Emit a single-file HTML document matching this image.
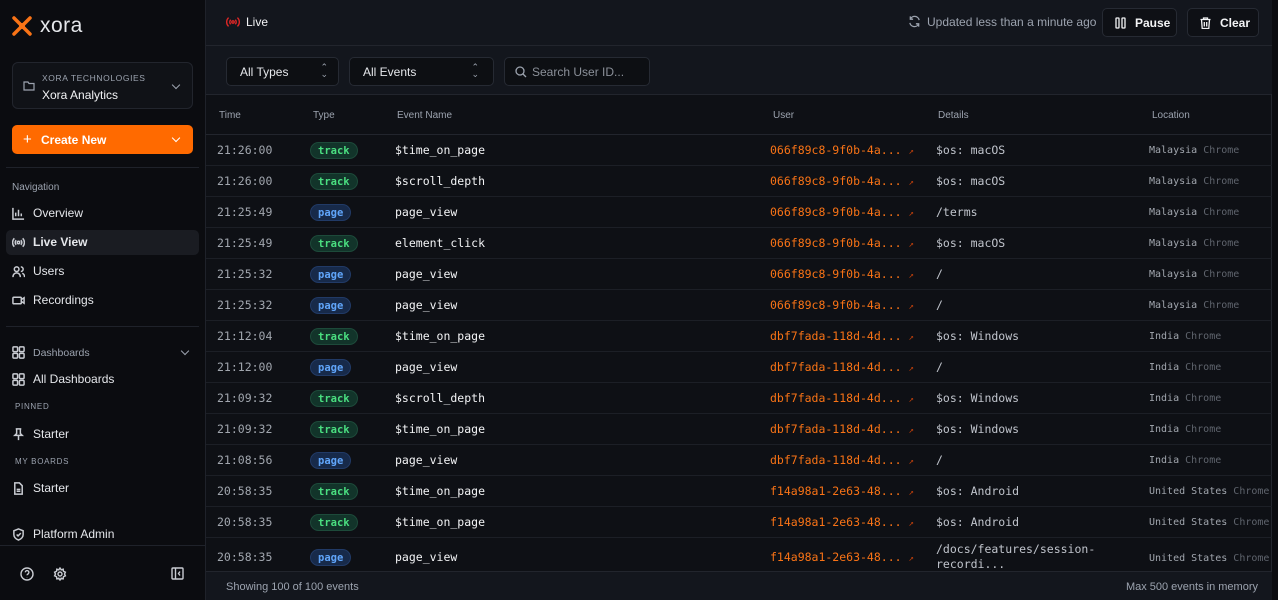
<!DOCTYPE html>
<html><head><meta charset="utf-8"><style>
*{box-sizing:border-box;margin:0;padding:0}
body{width:1278px;height:600px;overflow:hidden;background:#0b0c10;font-family:"Liberation Sans",sans-serif;color:#e5e7eb;position:relative}
.sb{position:absolute;left:0;top:0;width:205px;height:600px;background:#0b0c10}
.main{position:absolute;left:205px;top:0;width:1067px;height:600px;background:#0e1015;border-left:1px solid #1f222a;border-right:1px solid #23262e}
.abs{position:absolute}
.ni{position:absolute;left:12px;font-size:12px;color:#e5e7eb;display:flex;align-items:center;gap:8px}
.ni svg{width:13px;height:13px;stroke:#c9ccd2;fill:none;stroke-width:1.6}
.mono{font-family:"DejaVu Sans Mono","Liberation Mono",monospace}
.row{position:absolute;left:0;width:1066px;height:31px;border-bottom:1px solid #1c1f26;font-size:11.5px}
.row>div{position:absolute;top:0;height:30px;line-height:30px;white-space:nowrap}
.b{display:inline-block;height:17px;line-height:17px;border-radius:9px;padding:0 7px;font-size:10.5px;font-weight:bold;vertical-align:middle}
.tr{background:#12342a;color:#4ade80;border:1px solid #1d4a3a}
.pg{background:#172a4a;color:#60a5fa;border:1px solid #213a66}
.btn{position:absolute;top:8px;height:29px;border:1px solid #262a33;border-radius:5px;background:#0e1015;font-size:12px;font-weight:bold;color:#f3f4f6;display:flex;align-items:center;gap:9px;padding-left:12px}
.sel{position:absolute;top:57px;height:29px;border:1px solid #262a33;border-radius:5px;background:#0d0f13;font-size:12px;color:#e5e7eb;display:flex;align-items:center;padding-left:13px}
.chev{position:absolute;width:6px;height:6px;border-right:1.3px solid #9ca3af;border-bottom:1.3px solid #9ca3af;transform:rotate(45deg)}
</style></head><body>
<div class="sb">
 <svg class="abs" style="left:12px;top:16px" width="20" height="20" viewBox="0 0 20 20"><path d="M2 2 L8 8 M18 2 L12 8 M2 18 L8 12 M18 18 L12 12" stroke="#f97316" stroke-width="3.5" stroke-linecap="round"/><circle cx="10" cy="10" r="3" fill="#f97316"/></svg>
 <div class="abs" style="left:40px;top:14px;font-size:21px;color:#e5e7eb;letter-spacing:0.5px">xora</div>
 <div class="abs" style="left:12px;top:62px;width:181px;height:47px;border:1px solid #22252d;border-radius:6px;background:#101217"></div>
 <svg class="abs" style="left:23px;top:80px" width="12" height="11" viewBox="0 0 12 11"><path d="M1 2h4l1 1.5h5v6.5h-10z" fill="none" stroke="#9ca3af" stroke-width="1.2"/></svg>
 <div class="abs" style="left:42px;top:73px;font-size:8.5px;color:#9ca3af;letter-spacing:0.6px">XORA TECHNOLOGIES</div>
 <div class="abs" style="left:42px;top:88px;font-size:12px;color:#f3f4f6">Xora Analytics</div>
 <div class="chev" style="left:173px;top:82px"></div>
 <div class="abs" style="left:12px;top:125px;width:181px;height:29px;background:#ff6a00;border-radius:5px"></div>
 <div class="abs" style="left:23px;top:131px;font-size:15px;color:#fff">+</div>
 <div class="abs" style="left:41px;top:133px;font-size:12px;color:#fff;font-weight:bold">Create New</div>
 <div class="chev" style="left:173px;top:135px;border-color:#fff"></div>
 <div class="abs" style="left:6px;top:167px;width:193px;height:1px;background:#1f222a"></div>
 <div class="abs" style="left:12px;top:182px;font-size:10px;color:#9ca3af">Navigation</div>
 <div class="abs" style="left:6px;top:230px;width:193px;height:25px;background:#1a1c22;border-radius:5px"></div>
 <div class="ni" style="top:206px"><svg viewBox="0 0 14 14"><path d="M1 1v12h12M4 10V6M7 10V3M10 10V7"/></svg>Overview</div>
 <div class="ni" style="top:235px;font-weight:bold"><svg viewBox="0 0 14 14"><circle cx="7" cy="7" r="1.3"/><path d="M4.5 4.5a3.5 3.5 0 000 5M9.5 4.5a3.5 3.5 0 010 5M2.5 2.5a6.3 6.3 0 000 9M11.5 2.5a6.3 6.3 0 010 9"/></svg>Live View</div>
 <div class="ni" style="top:264px"><svg viewBox="0 0 14 14"><circle cx="5" cy="4.5" r="2.5"/><path d="M1 13c0-3 2-4.5 4-4.5s4 1.5 4 4.5M9.5 2a2.5 2.5 0 010 5M11 9c1.5.5 2.5 2 2.5 4"/></svg>Users</div>
 <div class="ni" style="top:293px"><svg viewBox="0 0 14 14"><rect x="1" y="3.5" width="9" height="7" rx="1"/><path d="M10 6l3-2v6l-3-2"/></svg>Recordings</div>
 <div class="abs" style="left:6px;top:326px;width:193px;height:1px;background:#1f222a"></div>
 <div class="ni" style="top:346px;font-size:10.5px;color:#9ca3af"><svg viewBox="0 0 14 14"><rect x="1" y="1" width="5" height="5" rx="1"/><rect x="8" y="1" width="5" height="5" rx="1"/><rect x="1" y="8" width="5" height="5" rx="1"/><rect x="8" y="8" width="5" height="5" rx="1"/></svg>Dashboards</div>
 <div class="chev" style="left:182px;top:348px"></div>
 <div class="ni" style="top:372px"><svg viewBox="0 0 14 14"><rect x="1" y="1" width="5" height="5" rx="1"/><rect x="8" y="1" width="5" height="5" rx="1"/><rect x="1" y="8" width="5" height="5" rx="1"/><rect x="8" y="8" width="5" height="5" rx="1"/></svg>All Dashboards</div>
 <div class="abs" style="left:15px;top:402px;font-size:8px;color:#9ca3af;letter-spacing:0.7px">PINNED</div>
 <div class="ni" style="top:427px"><svg viewBox="0 0 14 14"><path d="M4 1h6M5 1v5l-2 2h8l-2-2V1M7 8v5"/></svg>Starter</div>
 <div class="abs" style="left:15px;top:457px;font-size:8px;color:#9ca3af;letter-spacing:0.7px">MY BOARDS</div>
 <div class="ni" style="top:481px"><svg viewBox="0 0 14 14"><path d="M3 1h5l3 3v9H3zM5 8h4M5 10h4"/></svg>Starter</div>
 <div class="ni" style="top:527px"><svg viewBox="0 0 14 14"><path d="M7 1l5 2v4c0 3-2.5 5-5 6-2.5-1-5-3-5-6V3zM5 7l1.5 1.5L9.5 5.5"/></svg>Platform Admin</div>
 <div class="abs" style="left:0;top:545px;width:205px;height:1px;background:#1f222a"></div>
 <svg class="abs" style="left:20px;top:567px" width="14" height="14" viewBox="0 0 14 14" fill="none" stroke="#c9ccd2" stroke-width="1.4"><circle cx="7" cy="7" r="6"/><path d="M5.3 5.3a1.8 1.8 0 113 1.4c-.8.5-1.3.8-1.3 1.6M7 10.3v.2"/></svg>
 <svg class="abs" style="left:53px;top:567px" width="14" height="14" viewBox="0 0 14 14" fill="none" stroke="#c9ccd2" stroke-width="1.4"><circle cx="7" cy="7" r="2"/><path d="M7 1l1.2 1.8 2-.6.3 2.1 1.9.9-.9 1.8.9 1.8-1.9.9-.3 2.1-2-.6L7 13l-1.2-1.8-2 .6-.3-2.1-1.9-.9.9-1.8-.9-1.8 1.9-.9.3-2.1 2 .6z"/></svg>
 <svg class="abs" style="left:171px;top:567px" width="13" height="13" viewBox="0 0 13 13" fill="none" stroke="#c9ccd2" stroke-width="1.4"><rect x="1" y="1" width="11" height="11" rx="1"/><path d="M4.5 1v11M9 4.5L7.5 6.5 9 8.5"/></svg>
</div>
<div class="main">
 <div class="abs" style="left:0;top:0;width:1066px;height:95px;background:#13161d;border-bottom:1px solid #22252d"></div>
 <div class="abs" style="left:0;top:45px;width:1066px;height:1px;background:#22252d"></div>
 <svg class="abs" style="left:20px;top:16px" width="14" height="12" viewBox="0 0 14 12" fill="none" stroke="#dc2626" stroke-width="1.4"><circle cx="7" cy="6" r="1.2"/><path d="M4.7 3.7a3.3 3.3 0 000 4.6M9.3 3.7a3.3 3.3 0 010 4.6M2.6 1.6a6 6 0 000 8.8M11.4 1.6a6 6 0 010 8.8"/></svg>
 <div class="abs" style="left:40px;top:15px;font-size:12px;color:#f3f4f6">Live</div>
 <svg class="abs" style="left:702px;top:15px" width="13" height="13" viewBox="0 0 14 14" fill="none" stroke="#9ca3af" stroke-width="1.4"><path d="M12 5.5A5 5 0 002.5 4.5M2 8.5a5 5 0 009.5 1M2.5 1.5v3h3M11.5 12.5v-3h-3"/></svg>
 <div class="abs" style="left:721px;top:15px;font-size:12px;color:#9ca3af">Updated less than a minute ago</div>
 <div class="btn" style="left:896px;width:75px"><svg width="11" height="12" viewBox="0 0 11 12" fill="none" stroke="#f3f4f6" stroke-width="1.3"><rect x="1" y="1" width="3" height="10" rx=".5"/><rect x="7" y="1" width="3" height="10" rx=".5"/></svg>Pause</div>
 <div class="btn" style="left:981px;width:72px"><svg width="11" height="12" viewBox="0 0 11 12" fill="none" stroke="#f3f4f6" stroke-width="1.3"><path d="M0.5 2.5h10M3.5 2.5V1h4v1.5M1.5 2.5l.7 9h6.6l.7-9M4.3 5v4.5M6.7 5v4.5"/></svg>Clear</div>
 <div class="sel" style="left:20px;width:113px">All Types<span style="position:absolute;right:10px;top:6px;font-size:9px;color:#9ca3af;line-height:7px">&#8963;<br>&#8964;</span></div>
 <div class="sel" style="left:143px;width:145px">All Events<span style="position:absolute;right:14px;top:6px;font-size:9px;color:#9ca3af;line-height:7px">&#8963;<br>&#8964;</span></div>
 <div class="sel" style="left:298px;width:146px;color:#8b9099;padding-left:27px"><svg style="position:absolute;left:10px;top:8px" width="12" height="12" viewBox="0 0 12 12" fill="none" stroke="#9ca3af" stroke-width="1.3"><circle cx="5" cy="5" r="4"/><path d="M8 8l3 3"/></svg>Search User ID...</div>
 <div class="abs" style="left:0;top:96px;width:1066px;height:39px;border-bottom:1px solid #22252d;font-size:10px;color:#9ca3af">
  <span class="abs" style="left:13px;top:14px">Time</span><span class="abs" style="left:107px;top:14px">Type</span><span class="abs" style="left:191px;top:14px">Event Name</span><span class="abs" style="left:567px;top:14px">User</span><span class="abs" style="left:732px;top:14px">Details</span><span class="abs" style="left:946px;top:14px">Location</span>
 </div>
 <div id="rows"></div>
 <div class="abs" style="left:0;top:571px;width:1066px;height:29px;background:#13161d;border-top:1px solid #22252d;font-size:11px;color:#9ca3af"><span class="abs" style="left:20px;top:9px">Showing 100 of 100 events</span><span class="abs" style="right:14px;top:9px">Max 500 events in memory</span></div>
</div>
<script>
var d=[["21:26:00","t","$time_on_page","066f89c8-9f0b-4a...","$os: macOS","Malaysia"],
["21:26:00","t","$scroll_depth","066f89c8-9f0b-4a...","$os: macOS","Malaysia"],
["21:25:49","p","page_view","066f89c8-9f0b-4a...","/terms","Malaysia"],
["21:25:49","t","element_click","066f89c8-9f0b-4a...","$os: macOS","Malaysia"],
["21:25:32","p","page_view","066f89c8-9f0b-4a...","/","Malaysia"],
["21:25:32","p","page_view","066f89c8-9f0b-4a...","/","Malaysia"],
["21:12:04","t","$time_on_page","dbf7fada-118d-4d...","$os: Windows","India"],
["21:12:00","p","page_view","dbf7fada-118d-4d...","/","India"],
["21:09:32","t","$scroll_depth","dbf7fada-118d-4d...","$os: Windows","India"],
["21:09:32","t","$time_on_page","dbf7fada-118d-4d...","$os: Windows","India"],
["21:08:56","p","page_view","dbf7fada-118d-4d...","/","India"],
["20:58:35","t","$time_on_page","f14a98a1-2e63-48...","$os: Android","United States"],
["20:58:35","t","$time_on_page","f14a98a1-2e63-48...","$os: Android","United States"],
["20:58:35","p","page_view","f14a98a1-2e63-48...","/docs/features/session-<br>recordi...","United States"]];
var h="";d.forEach(function(r,i){var top=135+i*31;var last=i==13;var hh=last?40:31;
h+='<div class="row mono" style="top:'+top+'px;height:'+hh+'px'+(last?';border:none':'')+'"><div style="left:11px;color:#a1a6ae;height:'+(hh-1)+'px;line-height:'+(hh-1)+'px">'+r[0]+'</div><div style="left:104px;height:'+(hh-1)+'px;line-height:'+(hh-1)+'px"><span class="b '+(r[1]=="t"?"tr":"pg")+'">'+(r[1]=="t"?"track":"page")+'</span></div><div style="left:189px;color:#f3f4f6;height:'+(hh-1)+'px;line-height:'+(hh-1)+'px">'+r[2]+'</div><div style="left:564px;color:#f97316;height:'+(hh-1)+'px;line-height:'+(hh-1)+'px">'+r[3]+' <span style="font-size:9px;color:#c2410c">&#8599;</span></div><div style="left:730px;color:#c0c4cc;'+(last?'top:4px;line-height:15px;height:30px':'')+'">'+r[4]+'</div><div style="left:943px;font-size:10px;color:#a1a6ae;height:'+(hh-1)+'px;line-height:'+(hh+1)+'px">'+r[5]+' <span style="color:#5f646d">Chrome</span></div></div>';});
document.getElementById("rows").innerHTML=h;
</script>
</body></html>
